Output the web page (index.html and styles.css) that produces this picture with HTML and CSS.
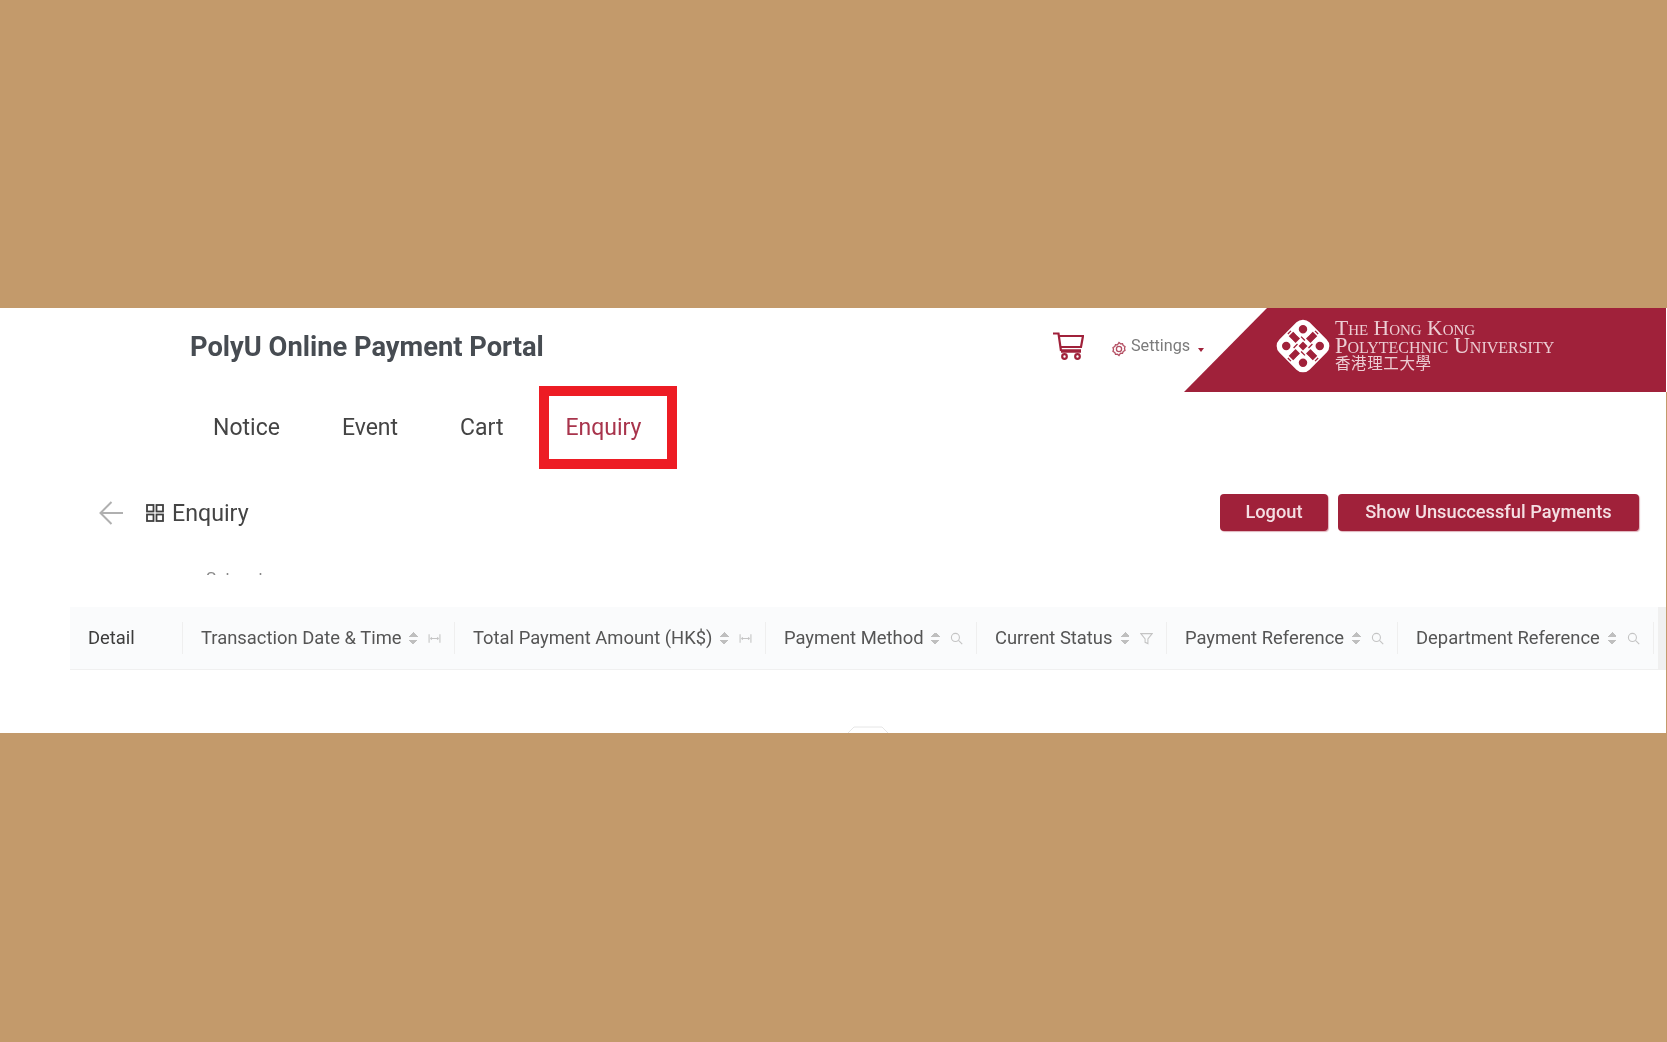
FILE: index.html
```html
<!DOCTYPE html>
<html lang="en">
<head>
<meta charset="utf-8">
<title>PolyU Online Payment Portal</title>
<link rel="stylesheet" href="styles.css">
</head>
<body>
<div class="page">
  <header class="top">
    <h1 class="title">PolyU Online Payment Portal</h1>
    <svg class="cart" viewBox="0 0 31 28" fill="none" stroke="#a0213a" stroke-width="2.2">
      <path d="M0 1.500h5.500l2.500 17.500"/>
      <path d="M6 4h24l-2 11H8"/>
      <path d="M8 19h20" stroke-width="3.500"/>
      <circle cx="11.500" cy="24.500" r="2.300"/>
      <circle cx="24.500" cy="24.500" r="2.300"/>
    </svg>
    <div class="settings">
      <svg class="gear" viewBox="0 0 16 16" fill="none" stroke="#a0213a" stroke-width="1.300">
        <path d="M8 1.500l1.500 1.300 2-.2.700 1.900 1.800 1-.5 2 .5 2-1.800 1-.7 1.900-2-.2L8 14.500l-1.500-1.300-2 .2-.7-1.900-1.800-1 .5-2-.5-2 1.800-1 .7-1.900 2 .2z"/>
        <circle cx="8" cy="8" r="2.600"/>
      </svg>
      <span class="settings-text">Settings</span>
      <span class="caret"></span>
    </div>
    <div class="banner">
      <svg class="logo" viewBox="-25.500 -25.500 51 51">
        <g transform="rotate(45)" fill="none">
          <g stroke="#fff" stroke-width="3.900">
            <rect x="-17.500" y="-17.500" width="35" height="35" rx="6.500"/>
            <circle cx="-10.800" cy="-10.800" r="5.800"/>
            <circle cx="10.800" cy="-10.800" r="5.800"/>
            <circle cx="-10.800" cy="10.800" r="5.800"/>
            <circle cx="10.800" cy="10.800" r="5.800"/>
            <path d="M-4.800 -17V17M4.800 -17V17M-17 -4.800H17M-17 4.800H17"/>
          </g>
          <g stroke="#a0213a" stroke-width="1.200">
            <path d="M-7.300 -4.800H-2.300M2.300 4.800H7.300M-4.800 2.300V7.300M4.800 -7.300V-2.300"/>
            <path d="M-2 -17.500H2M-2 17.500H2M-17.500 -2V2M17.500 -2V2"/>
          </g>
        </g>
      </svg>
      <div class="wordmark">
        <div class="wm-en wm-first">The Hong Kong</div>
        <div class="wm-en wm-second">Polytechnic University</div>
        <div class="wm-zh">香港理工大學</div>
      </div>
    </div>
  </header>

  <main class="main">
    <nav class="nav">
      <a class="nav-item"><span class="nav-label">Notice</span></a>
      <a class="nav-item"><span class="nav-label">Event</span></a>
      <a class="nav-item"><span class="nav-label">Cart</span></a>
      <a class="nav-item active"><span class="nav-label">Enquiry</span></a>
    </nav>

    <div class="toolbar">
      <svg class="back" viewBox="0 0 24 24" fill="none" stroke="#b0b0b0" stroke-width="2">
        <path d="M24 12H2M12.500 1L1.500 12l11 11"/>
      </svg>
      <svg class="grid-ic" viewBox="0 0 18 18" fill="none" stroke="#3f3f3f" stroke-width="1.800">
        <rect x="1" y="1" width="6.500" height="6.500"/>
        <rect x="10.500" y="1" width="6.500" height="6.500"/>
        <rect x="1" y="10.500" width="6.500" height="6.500"/>
        <rect x="10.500" y="10.500" width="6.500" height="6.500"/>
      </svg>
      <span class="crumb">Enquiry</span>
      <button class="btn logout">Logout</button>
      <button class="btn unsuccessful">Show Unsuccessful Payments</button>
    </div>

    <div class="clipped">Status</div>

    <div class="thead">
      <div class="th"><div class="th-in"><span class="lbl strong">Detail</span></div></div>
      <div class="th"><div class="th-in"><span class="lbl">Transaction Date &amp; Time</span><span class="sort"></span><svg class="ic" viewBox="0 0 12 12"><path d="M1 2v8M11 2v8M2.500 6h7M3.500 5l-1 1 1 1M8.500 5l1 1-1 1"/></svg></div></div>
      <div class="th"><div class="th-in"><span class="lbl">Total Payment Amount (HK$)</span><span class="sort"></span><svg class="ic" viewBox="0 0 12 12"><path d="M1 2v8M11 2v8M2.500 6h7M3.500 5l-1 1 1 1M8.500 5l1 1-1 1"/></svg></div></div>
      <div class="th"><div class="th-in"><span class="lbl">Payment Method</span><span class="sort"></span><svg class="ic" viewBox="0 0 12 12"><circle cx="5" cy="5" r="3.700"/><path d="M7.800 7.800L11.300 11.300"/></svg></div></div>
      <div class="th"><div class="th-in"><span class="lbl">Current Status</span><span class="sort"></span><svg class="ic" viewBox="0 0 12 12"><path d="M.8 1.500h10.400L7.300 6.500v4.200l-2.600-1.200v-3z"/></svg></div></div>
      <div class="th"><div class="th-in"><span class="lbl">Payment Reference</span><span class="sort"></span><svg class="ic" viewBox="0 0 12 12"><circle cx="5" cy="5" r="3.700"/><path d="M7.800 7.800L11.300 11.300"/></svg></div></div>
      <div class="th"><div class="th-in"><span class="lbl">Department Reference</span><span class="sort"></span><svg class="ic" viewBox="0 0 12 12"><circle cx="5" cy="5" r="3.700"/><path d="M7.800 7.800L11.300 11.300"/></svg></div></div>
      <div class="th-end"></div>
    </div>

    <div class="tbody">
      <svg class="peek" viewBox="0 0 40 7" fill="none" stroke="#e6e6e6" stroke-width="1"><path d="M0 7L6 1H34L40 7"/></svg>
    </div>
  </main>
</div>
</body>
</html>
```
FILE: styles.css
```css
* { box-sizing: border-box; }
html, body { margin: 0; height: 100%; }
body {
  background: #c39a6b;
  padding-top: 308px;
  font-family: Roboto, "Liberation Sans", sans-serif;
  color: #454545;
  overflow: hidden;
}
.page {
  width: 1667px;
  height: 425px;
  display: flex;
  flex-direction: column;
}
.top {
  height: 84px;
  display: flex;
  align-items: flex-start;
  flex: none;
  background: #fff;
}
.title {
  margin: 21px 0 0 190px;
  font-size: 27.3px;
  line-height: 36px;
  font-weight: 700;
  color: #474c52;
  width: 863px;
  flex: none;
  white-space: nowrap;
  filter: blur(.4px);
}
.cart { width: 31px; height: 28px; margin-top: 24px; flex: none; filter: blur(.4px); }
.settings {
  display: flex;
  align-items: center;
  margin: 26px 0 0 27px;
  height: 22px;
  flex: none;
  filter: blur(.4px);
}
.gear { width: 16px; height: 16px; margin-top: 7px; opacity: .8; }
.settings-text { font-size: 16.2px; color: #7b7b7b; margin-left: 4px; width: 59px; }
.caret {
  width: 0; height: 0;
  margin: 9px 0 0 8px;
  border-left: 3.5px solid transparent;
  border-right: 3.5px solid transparent;
  border-top: 4px solid #a0213a;
}
.banner {
  margin-left: -20px;
  width: 482px;
  height: 84px;
  flex: none;
  background: #a0213a;
  clip-path: polygon(83px 0, 100% 0, 100% 100%, 0 100%);
  display: flex;
  align-items: flex-start;
  padding: 10px 0 0 91px;
}
.logo { width: 56px; height: 56px; flex: none; filter: blur(.5px); }
.wordmark {
  margin: 2px 0 0 4px;
  color: #eccdd3;
  font-family: "Liberation Serif", serif;
  filter: blur(.4px);
}
.wm-en { line-height: 17px; font-variant: small-caps; white-space: nowrap; }
.wm-first { font-size: 21.6px; }
.wm-second { font-size: 22.4px; }
.wm-zh {
  font-family: "Noto Sans CJK TC", serif;
  font-size: 15.5px;
  line-height: 16px;
  letter-spacing: .6px;
}
.main {
  width: 1666px;
  flex: 1;
  min-height: 0;
  background: #fff;
  display: flex;
  flex-direction: column;
}
.nav {
  height: 70px;
  flex: none;
  display: flex;
  align-items: stretch;
  gap: 62px;
  padding-left: 213px;
}
.nav-item {
  position: relative;
  display: flex;
  align-items: center;
  font-size: 23px;
  color: #444;
}
.nav-label { filter: blur(.4px); }
.nav-item.active { color: #a8344c; }
.nav-item.active::after {
  content: "";
  position: absolute;
  top: -6px;
  bottom: -7px;
  left: -26px;
  right: -36px;
  border: 10px solid #ed1c24;
}
.toolbar {
  margin-top: 32px;
  height: 37px;
  flex: none;
  display: flex;
  align-items: center;
  padding-left: 99px;
  filter: blur(.4px);
}
.back { width: 24px; height: 24px; }
.grid-ic { width: 18px; height: 18px; margin-left: 23px; }
.crumb { font-size: 23.2px; margin-left: 8px; margin-right: auto; color: #444; }
.btn {
  height: 37px;
  border: 0;
  border-radius: 4px;
  background: #a0213a;
  color: #f4dfe3;
  font-family: inherit;
  font-size: 18.3px;
  font-weight: 500;
  padding: 0 0 2px;
  box-shadow: 1px 1px 1px rgba(160, 33, 58, .35);
}
.logout { width: 108px; margin-right: 10px; }
.unsuccessful { width: 301px; margin-right: 27px; }
.clipped {
  height: 3px;
  overflow: hidden;
  margin: 41px 0 0 206px;
  font-size: 17px;
  line-height: 12px;
  color: #888;
  letter-spacing: 9px;
  flex: none;
  filter: blur(.3px);
}
.thead {
  margin: 32px 0 0 70px;
  height: 63px;
  flex: none;
  display: grid;
  grid-template-columns: 113px 272px 311px 211px 190px 231px 256px 1fr;
  align-items: center;
  background: #fafbfc;
  border-bottom: 1px solid #f0f0f0;
  filter: blur(.4px);
}
.th-in {
  height: 32px;
  display: flex;
  align-items: center;
  padding: 0 13px 0 18px;
  border-right: 1px solid #efefef;
}
.th-end { height: 100%; margin-left: 4px; background: #f0f0f0; }
.lbl { font-size: 18.4px; color: #555; white-space: nowrap; margin-right: auto; padding-bottom: 2px; }
.lbl.strong { color: #3c3c3c; }
.sort {
  width: 10px;
  height: 13px;
  margin-right: 10px;
  flex: none;
  background:
    conic-gradient(from 135deg at 50% 0, #bfbfbf 90deg, transparent 0) top / 100% 5px no-repeat,
    conic-gradient(from -45deg at 50% 100%, #bfbfbf 90deg, transparent 0) bottom / 100% 5px no-repeat;
}
.ic {
  width: 13px;
  height: 13px;
  flex: none;
  fill: none;
  stroke: #c4c4c4;
  stroke-width: 1;
}
.tbody { flex: 1; display: flex; align-items: flex-end; padding-left: 848px; }
.peek { width: 40px; height: 7px; display: block; }
```
